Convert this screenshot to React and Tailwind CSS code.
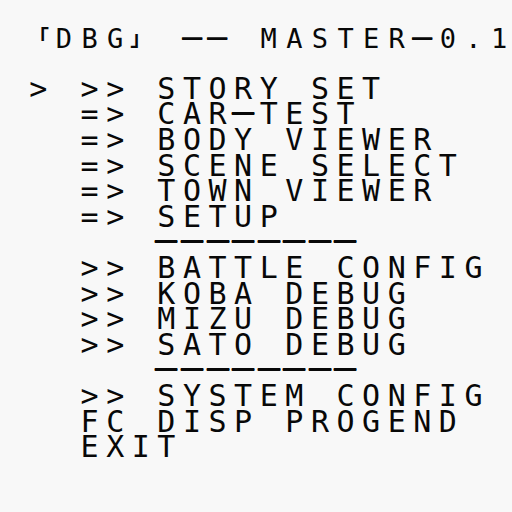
const TITLE = ' 「DBG」 -- MASTER-0.1';

const MENU = [
  ' > >> STORY SET',
  '   => CAR-TEST',
  '   => BODY VIEWER',
  '   => SCENE SELECT',
  '   => TOWN VIEWER',
  '   => SETUP',
  '      --------',
  '   >> BATTLE CONFIG',
  '   >> KOBA DEBUG',
  '   >> MIZU DEBUG',
  '   >> SATO DEBUG',
  '      --------',
  '   >> SYSTEM CONFIG',
  '   FC DISP PROGEND',
  '   EXIT',
];

// one character per 25.6px cell, like the tile grid of the original screen
function Cell({ ch }) {
  if (ch === '-') {
    return (
      <span className="flex justify-center w-[25.6px] h-[25.6px] leading-[20px]">
        <span className="scale-x-125 [text-shadow:0_1px_0_#080808]">—</span>
      </span>
    );
  }
  if (ch === '「' || ch === '」') {
    return (
      <span className="inline-block w-[25.6px] text-center text-[21px] font-bold">{ch}</span>
    );
  }
  return <span className="inline-block w-[25.6px] text-center whitespace-pre">{ch}</span>;
}

function Row({ text, title }) {
  return (
    <div
      className={
        'flex h-[25.6px] leading-[25.6px] ' +
        (title ? 'text-[27px]' : 'text-[30px] -translate-y-px')
      }
    >
      {Array.from(text).map((ch, i) => (
        <Cell key={i} ch={ch} />
      ))}
    </div>
  );
}

export default function App() {
  return (
    <div className="w-[512px] h-[512px] bg-[#f8f8f8] text-[#080808] overflow-hidden font-['DejaVu_Sans_Mono','Noto_Sans_CJK_JP',monospace]">
      <div className="h-[25.6px]" />
      <Row text={TITLE} title />
      <div className="h-[25.6px]" />
      {MENU.map((line, i) => (
        <Row key={i} text={line} />
      ))}
    </div>
  );
}
